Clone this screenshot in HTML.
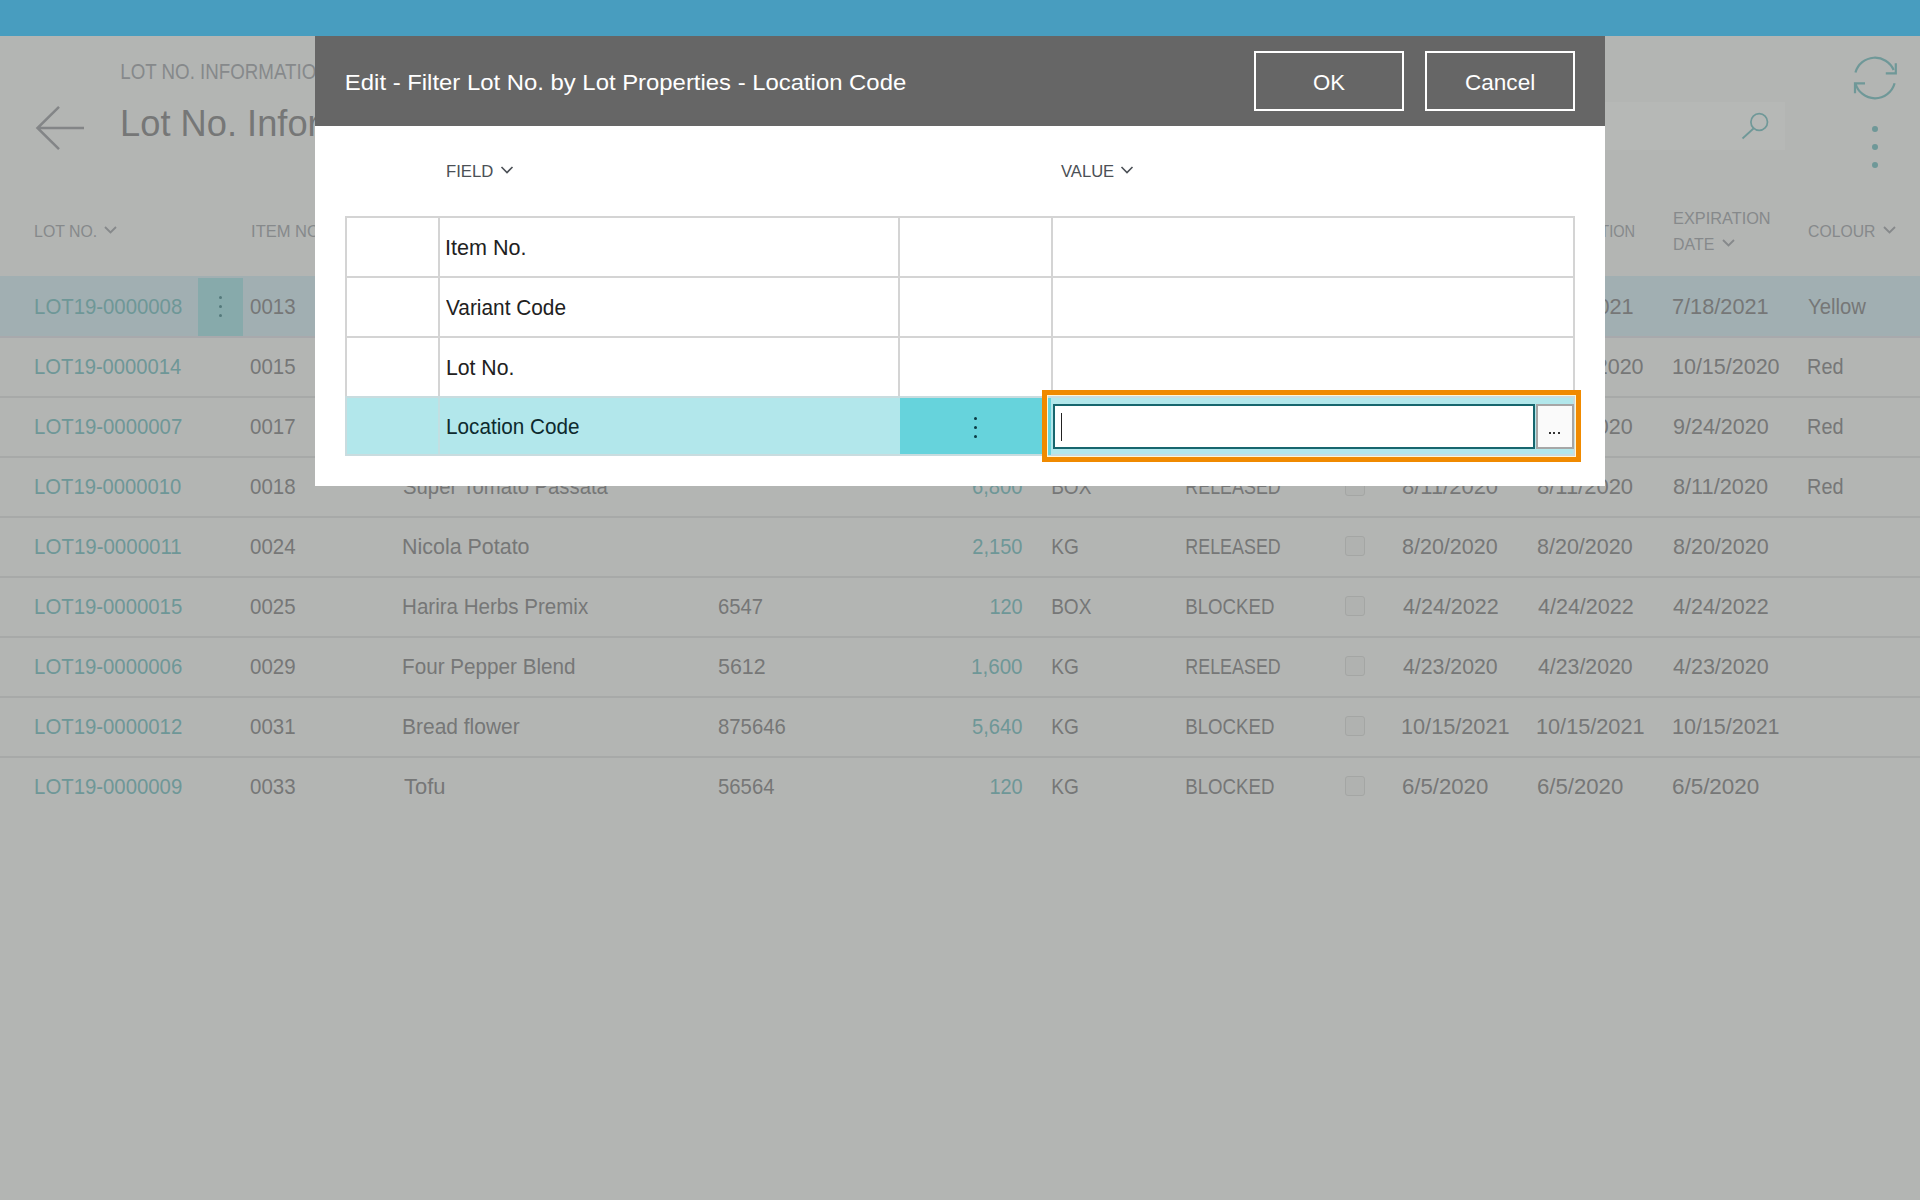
<!DOCTYPE html>
<html><head><meta charset="utf-8">
<style>
*{margin:0;padding:0;box-sizing:border-box}
html,body{width:1920px;height:1200px;overflow:hidden;background:#b3b5b3;font-family:"Liberation Sans",sans-serif;position:relative}
.tx{position:absolute;white-space:nowrap;line-height:1;font-family:"Liberation Sans",sans-serif}
.r{position:absolute}
.cb{position:absolute;width:20px;height:20px;border:1.5px solid #a4a6a4;background:#b0b2b0;border-radius:3px}
#dlg{position:absolute;left:315px;top:36px;width:1290px;height:450px;background:#fff;z-index:5}
#dlgt{position:absolute;left:0;top:0;width:1920px;height:1200px;z-index:6}
</style></head><body>
<div class="r" style="left:0;top:0;width:1920px;height:36px;background:#489dbf"></div>

<!-- back arrow -->
<svg class="r" style="left:30px;top:100px" width="60" height="56" viewBox="0 0 60 56"><path d="M7.5 28 H54 M29 6.8 L7.5 28 L29 49.2" stroke="#838587" stroke-width="2.5" fill="none"/></svg>

<!-- search box & icons -->
<div class="r" style="left:1605px;top:102px;width:180px;height:48px;background:#b6b8b6"></div>
<svg class="r" style="left:1730px;top:105px" width="45" height="45" viewBox="0 0 45 45"><circle cx="29.2" cy="17" r="8.3" stroke="#6f9898" stroke-width="1.7" fill="none"/><path d="M23.5 23.5 L12.5 33.5" stroke="#6f9898" stroke-width="1.8" fill="none"/></svg>
<svg class="r" style="left:1845px;top:48px" width="60" height="60" viewBox="0 0 60 60"><path d="M10.46 24.5 A20.3 20.3 0 0 1 48.66 22" stroke="#6f9898" stroke-width="2.2" fill="none"/><path d="M50.8 15.3 V25.3 H40.8" stroke="#6f9898" stroke-width="2.2" fill="none"/><path d="M49.6 35.3 A20.3 20.3 0 0 1 10.33 35" stroke="#6f9898" stroke-width="2.2" fill="none"/><path d="M10 45.3 V35.3 H20" stroke="#6f9898" stroke-width="2.2" fill="none"/></svg>
<div class="r" style="left:1872px;top:126px;width:6px;height:6px;border-radius:3px;background:#6f9898"></div>
<div class="r" style="left:1872px;top:144px;width:6px;height:6px;border-radius:3px;background:#6f9898"></div>
<div class="r" style="left:1872px;top:162px;width:6px;height:6px;border-radius:3px;background:#6f9898"></div>

<!-- header chevrons -->
<svg class="r" style="left:100px;top:222px" width="20" height="16" viewBox="0 0 20 16"><path d="M5 5 L10.5 10.5 L16 5" stroke="#86898b" stroke-width="1.8" fill="none"/></svg>
<svg class="r" style="left:1718px;top:236px" width="20" height="16" viewBox="0 0 20 16"><path d="M5 4 L10.5 9.5 L16 4" stroke="#86898b" stroke-width="1.8" fill="none"/></svg>
<svg class="r" style="left:1879px;top:222px" width="20" height="16" viewBox="0 0 20 16"><path d="M5 5 L10.5 10.5 L16 5" stroke="#86898b" stroke-width="1.8" fill="none"/></svg>

<!-- row highlight -->
<div class="r" style="left:0;top:276px;width:1920px;height:60px;background:#a1afb2"></div>
<div class="r" style="left:198px;top:278px;width:45px;height:58px;background:#87aaab"></div>
<div class="r" style="left:218.5px;top:296px;width:3px;height:3px;border-radius:2px;background:#557a7c"></div>
<div class="r" style="left:218.5px;top:305px;width:3px;height:3px;border-radius:2px;background:#557a7c"></div>
<div class="r" style="left:218.5px;top:314px;width:3px;height:3px;border-radius:2px;background:#557a7c"></div>
<!-- row lines -->
<div class="r" style="left:0;top:336px;width:1920px;height:2px;background:#a8a9ac"></div>
<div class="r" style="left:0;top:396px;width:1920px;height:2px;background:#a7a9a8"></div>
<div class="r" style="left:0;top:456px;width:1920px;height:2px;background:#a7a9a8"></div>
<div class="r" style="left:0;top:516px;width:1920px;height:2px;background:#a7a9a8"></div>
<div class="r" style="left:0;top:576px;width:1920px;height:2px;background:#a7a9a8"></div>
<div class="r" style="left:0;top:636px;width:1920px;height:2px;background:#a7a9a8"></div>
<div class="r" style="left:0;top:696px;width:1920px;height:2px;background:#a7a9a8"></div>
<div class="r" style="left:0;top:756px;width:1920px;height:2px;background:#a7a9a8"></div>
<!-- checkboxes -->
<div class="cb" style="left:1345px;top:476px"></div>
<div class="cb" style="left:1345px;top:536px"></div>
<div class="cb" style="left:1345px;top:596px"></div>
<div class="cb" style="left:1345px;top:656px"></div>
<div class="cb" style="left:1345px;top:716px"></div>
<div class="cb" style="left:1345px;top:776px"></div>

<div class="tx" id="t0" style="left:120.00px;transform-origin:1.50px 0;top:61.37px;font-size:22px;color:#86898b;transform:scaleX(0.8519);">LOT NO. INFORMATION</div>
<div class="tx" id="t1" style="left:120.00px;transform-origin:3.00px 0;top:104.75px;font-size:37.5px;color:#767777;transform:scaleX(0.9672);">Lot No. Information</div>
<div class="tx" id="t2" style="left:33.60px;transform-origin:1.70px 0;top:222.81px;font-size:17px;color:#86898b;transform:scaleX(0.9323);">LOT NO.</div>
<div class="tx" id="t3" style="left:250.60px;transform-origin:1.20px 0;top:222.81px;font-size:17px;color:#86898b;transform:scaleX(0.9726);">ITEM NO.</div>
<div class="tx" id="t4" style="left:1537.00px;transform-origin:1.00px 0;top:222.81px;font-size:17px;color:#86898b;transform:scaleX(0.8571);">PRODUCTION</div>
<div class="tx" id="t5" style="left:1672.50px;transform-origin:1.25px 0;top:210.11px;font-size:17px;color:#86898b;transform:scaleX(0.9596);">EXPIRATION</div>
<div class="tx" id="t6" style="left:1672.50px;transform-origin:1.25px 0;top:235.61px;font-size:17px;color:#86898b;transform:scaleX(0.9345);">DATE</div>
<div class="tx" id="t7" style="left:1807.50px;transform-origin:1.25px 0;top:222.81px;font-size:17px;color:#86898b;transform:scaleX(0.9261);">COLOUR</div>
<div class="tx" id="t8" style="left:33.60px;transform-origin:1.70px 0;top:296.78px;font-size:21.4px;color:#6e9797;transform:scaleX(0.9510);">LOT19-0000008</div>
<div class="tx" id="t9" style="left:250.00px;transform-origin:1.00px 0;top:296.78px;font-size:21.4px;color:#767777;transform:scaleX(0.9565);">0013</div>
<div class="tx" id="t10" style="left:403.00px;transform-origin:1.00px 0;top:296.78px;font-size:21.4px;color:#767777;">Sweet Chilli Sauce</div>
<div class="tx" id="t11" style="right:897.00px;transform-origin:calc(100% - 0.50px) 0;top:296.78px;font-size:21.4px;color:#6e9797;transform:scaleX(0.9245);">4,000</div>
<div class="tx" id="t12" style="left:1051.00px;transform-origin:1.50px 0;top:296.78px;font-size:21.4px;color:#767777;transform:scaleX(0.8929);">KG</div>
<div class="tx" id="t13" style="left:1185.00px;transform-origin:2.00px 0;top:296.78px;font-size:21.4px;color:#767777;transform:scaleX(0.8360);">RELEASED</div>
<div class="tx" id="t14" style="left:1402.00px;transform-origin:1.00px 0;top:296.78px;font-size:21.4px;color:#767777;transform:scaleX(1.0161);">7/18/2021</div>
<div class="tx" id="t15" style="left:1537.00px;transform-origin:1.00px 0;top:296.78px;font-size:21.4px;color:#767777;transform:scaleX(1.0161);">7/18/2021</div>
<div class="tx" id="t16" style="left:1672.00px;transform-origin:1.50px 0;top:296.78px;font-size:21.4px;color:#767777;transform:scaleX(1.0161);">7/18/2021</div>
<div class="tx" id="t17" style="left:1808.00px;transform-origin:0.50px 0;top:296.78px;font-size:21.4px;color:#767777;transform:scaleX(0.9475);">Yellow</div>
<div class="tx" id="t18" style="left:33.60px;transform-origin:1.70px 0;top:356.78px;font-size:21.4px;color:#6e9797;transform:scaleX(0.9448);">LOT19-0000014</div>
<div class="tx" id="t19" style="left:250.00px;transform-origin:1.00px 0;top:356.78px;font-size:21.4px;color:#767777;transform:scaleX(0.9565);">0015</div>
<div class="tx" id="t20" style="left:404.00px;transform-origin:0.00px 0;top:356.78px;font-size:21.4px;color:#767777;">Tomato Ketchup</div>
<div class="tx" id="t21" style="right:897.00px;transform-origin:calc(100% - 0.50px) 0;top:356.78px;font-size:21.4px;color:#6e9797;transform:scaleX(0.9423);">2,500</div>
<div class="tx" id="t22" style="left:1051.00px;transform-origin:1.50px 0;top:356.78px;font-size:21.4px;color:#767777;transform:scaleX(0.8907);">BOX</div>
<div class="tx" id="t23" style="left:1185.00px;transform-origin:2.00px 0;top:356.78px;font-size:21.4px;color:#767777;transform:scaleX(0.8360);">RELEASED</div>
<div class="tx" id="t24" style="left:1401.00px;transform-origin:2.00px 0;top:356.78px;font-size:21.4px;color:#767777;transform:scaleX(1.0048);">10/15/2020</div>
<div class="tx" id="t25" style="left:1536.00px;transform-origin:2.00px 0;top:356.78px;font-size:21.4px;color:#767777;transform:scaleX(1.0048);">10/15/2020</div>
<div class="tx" id="t26" style="left:1672.00px;transform-origin:1.50px 0;top:356.78px;font-size:21.4px;color:#767777;transform:scaleX(1.0048);">10/15/2020</div>
<div class="tx" id="t27" style="left:1807.00px;transform-origin:1.50px 0;top:356.78px;font-size:21.4px;color:#767777;transform:scaleX(0.9278);">Red</div>
<div class="tx" id="t28" style="left:33.60px;transform-origin:1.70px 0;top:416.78px;font-size:21.4px;color:#6e9797;transform:scaleX(0.9510);">LOT19-0000007</div>
<div class="tx" id="t29" style="left:250.00px;transform-origin:1.00px 0;top:416.78px;font-size:21.4px;color:#767777;transform:scaleX(0.9565);">0017</div>
<div class="tx" id="t30" style="left:402.00px;transform-origin:2.00px 0;top:416.78px;font-size:21.4px;color:#767777;">Roasted Red Pepper</div>
<div class="tx" id="t31" style="right:897.00px;transform-origin:calc(100% - 0.50px) 0;top:416.78px;font-size:21.4px;color:#6e9797;transform:scaleX(0.9608);">1,200</div>
<div class="tx" id="t32" style="left:1051.00px;transform-origin:1.50px 0;top:416.78px;font-size:21.4px;color:#767777;transform:scaleX(0.8929);">KG</div>
<div class="tx" id="t33" style="left:1185.00px;transform-origin:2.00px 0;top:416.78px;font-size:21.4px;color:#767777;transform:scaleX(0.8360);">RELEASED</div>
<div class="tx" id="t34" style="left:1402.00px;transform-origin:1.00px 0;top:416.78px;font-size:21.4px;color:#767777;transform:scaleX(1.0053);">9/24/2020</div>
<div class="tx" id="t35" style="left:1537.00px;transform-origin:1.00px 0;top:416.78px;font-size:21.4px;color:#767777;transform:scaleX(1.0053);">9/24/2020</div>
<div class="tx" id="t36" style="left:1673.00px;transform-origin:0.50px 0;top:416.78px;font-size:21.4px;color:#767777;transform:scaleX(1.0053);">9/24/2020</div>
<div class="tx" id="t37" style="left:1807.00px;transform-origin:1.50px 0;top:416.78px;font-size:21.4px;color:#767777;transform:scaleX(0.9278);">Red</div>
<div class="tx" id="t38" style="left:33.60px;transform-origin:1.70px 0;top:476.78px;font-size:21.4px;color:#6e9797;transform:scaleX(0.9448);">LOT19-0000010</div>
<div class="tx" id="t39" style="left:250.00px;transform-origin:1.00px 0;top:476.78px;font-size:21.4px;color:#767777;transform:scaleX(0.9565);">0018</div>
<div class="tx" id="t40" style="left:403.00px;transform-origin:1.00px 0;top:476.78px;font-size:21.4px;color:#767777;transform:scaleX(0.9479);">Super Tomato Passata</div>
<div class="tx" id="t41" style="right:897.00px;transform-origin:calc(100% - 0.50px) 0;top:476.78px;font-size:21.4px;color:#6e9797;transform:scaleX(0.9423);">6,800</div>
<div class="tx" id="t42" style="left:1051.00px;transform-origin:1.50px 0;top:476.78px;font-size:21.4px;color:#767777;transform:scaleX(0.8907);">BOX</div>
<div class="tx" id="t43" style="left:1185.00px;transform-origin:2.00px 0;top:476.78px;font-size:21.4px;color:#767777;transform:scaleX(0.8360);">RELEASED</div>
<div class="tx" id="t44" style="left:1402.00px;transform-origin:1.00px 0;top:476.78px;font-size:21.4px;color:#767777;transform:scaleX(1.0272);">8/11/2020</div>
<div class="tx" id="t45" style="left:1537.00px;transform-origin:1.00px 0;top:476.78px;font-size:21.4px;color:#767777;transform:scaleX(1.0272);">8/11/2020</div>
<div class="tx" id="t46" style="left:1673.00px;transform-origin:0.50px 0;top:476.78px;font-size:21.4px;color:#767777;transform:scaleX(1.0161);">8/11/2020</div>
<div class="tx" id="t47" style="left:1807.00px;transform-origin:1.50px 0;top:476.78px;font-size:21.4px;color:#767777;transform:scaleX(0.9278);">Red</div>
<div class="tx" id="t48" style="left:33.60px;transform-origin:1.70px 0;top:536.78px;font-size:21.4px;color:#6e9797;transform:scaleX(0.9572);">LOT19-0000011</div>
<div class="tx" id="t49" style="left:250.00px;transform-origin:1.00px 0;top:536.78px;font-size:21.4px;color:#767777;transform:scaleX(0.9565);">0024</div>
<div class="tx" id="t50" style="left:402.00px;transform-origin:2.00px 0;top:536.78px;font-size:21.4px;color:#767777;transform:scaleX(1.0024);">Nicola Potato</div>
<div class="tx" id="t51" style="right:897.00px;transform-origin:calc(100% - 0.50px) 0;top:536.78px;font-size:21.4px;color:#6e9797;transform:scaleX(0.9365);">2,150</div>
<div class="tx" id="t52" style="left:1051.00px;transform-origin:1.50px 0;top:536.78px;font-size:21.4px;color:#767777;transform:scaleX(0.8929);">KG</div>
<div class="tx" id="t53" style="left:1185.00px;transform-origin:2.00px 0;top:536.78px;font-size:21.4px;color:#767777;transform:scaleX(0.8360);">RELEASED</div>
<div class="tx" id="t54" style="left:1402.00px;transform-origin:1.00px 0;top:536.78px;font-size:21.4px;color:#767777;transform:scaleX(1.0053);">8/20/2020</div>
<div class="tx" id="t55" style="left:1537.00px;transform-origin:1.00px 0;top:536.78px;font-size:21.4px;color:#767777;transform:scaleX(1.0053);">8/20/2020</div>
<div class="tx" id="t56" style="left:1673.00px;transform-origin:0.50px 0;top:536.78px;font-size:21.4px;color:#767777;transform:scaleX(1.0053);">8/20/2020</div>
<div class="tx" id="t57" style="left:33.60px;transform-origin:1.70px 0;top:596.78px;font-size:21.4px;color:#6e9797;transform:scaleX(0.9510);">LOT19-0000015</div>
<div class="tx" id="t58" style="left:250.00px;transform-origin:1.00px 0;top:596.78px;font-size:21.4px;color:#767777;transform:scaleX(0.9565);">0025</div>
<div class="tx" id="t59" style="left:402.00px;transform-origin:2.00px 0;top:596.78px;font-size:21.4px;color:#767777;transform:scaleX(0.9607);">Harira Herbs Premix</div>
<div class="tx" id="t60" style="left:718.00px;transform-origin:1.00px 0;top:596.78px;font-size:21.4px;color:#767777;transform:scaleX(0.9457);">6547</div>
<div class="tx" id="t61" style="right:897.00px;transform-origin:calc(100% - 0.50px) 0;top:596.78px;font-size:21.4px;color:#6e9797;transform:scaleX(0.9324);">120</div>
<div class="tx" id="t62" style="left:1051.00px;transform-origin:1.50px 0;top:596.78px;font-size:21.4px;color:#767777;transform:scaleX(0.8907);">BOX</div>
<div class="tx" id="t63" style="left:1185.00px;transform-origin:2.00px 0;top:596.78px;font-size:21.4px;color:#767777;transform:scaleX(0.8727);">BLOCKED</div>
<div class="tx" id="t64" style="left:1403.00px;transform-origin:0.00px 0;top:596.78px;font-size:21.4px;color:#767777;transform:scaleX(1.0053);">4/24/2022</div>
<div class="tx" id="t65" style="left:1538.00px;transform-origin:0.00px 0;top:596.78px;font-size:21.4px;color:#767777;transform:scaleX(1.0053);">4/24/2022</div>
<div class="tx" id="t66" style="left:1673.00px;transform-origin:0.50px 0;top:596.78px;font-size:21.4px;color:#767777;transform:scaleX(1.0053);">4/24/2022</div>
<div class="tx" id="t67" style="left:33.60px;transform-origin:1.70px 0;top:656.78px;font-size:21.4px;color:#6e9797;transform:scaleX(0.9510);">LOT19-0000006</div>
<div class="tx" id="t68" style="left:250.00px;transform-origin:1.00px 0;top:656.78px;font-size:21.4px;color:#767777;transform:scaleX(0.9565);">0029</div>
<div class="tx" id="t69" style="left:402.00px;transform-origin:2.00px 0;top:656.78px;font-size:21.4px;color:#767777;transform:scaleX(0.9659);">Four Pepper Blend</div>
<div class="tx" id="t70" style="left:718.00px;transform-origin:1.00px 0;top:656.78px;font-size:21.4px;color:#767777;">5612</div>
<div class="tx" id="t71" style="right:897.00px;transform-origin:calc(100% - 0.50px) 0;top:656.78px;font-size:21.4px;color:#6e9797;transform:scaleX(0.9608);">1,600</div>
<div class="tx" id="t72" style="left:1051.00px;transform-origin:1.50px 0;top:656.78px;font-size:21.4px;color:#767777;transform:scaleX(0.8929);">KG</div>
<div class="tx" id="t73" style="left:1185.00px;transform-origin:2.00px 0;top:656.78px;font-size:21.4px;color:#767777;transform:scaleX(0.8360);">RELEASED</div>
<div class="tx" id="t74" style="left:1403.00px;transform-origin:0.00px 0;top:656.78px;font-size:21.4px;color:#767777;transform:scaleX(0.9947);">4/23/2020</div>
<div class="tx" id="t75" style="left:1538.00px;transform-origin:0.00px 0;top:656.78px;font-size:21.4px;color:#767777;transform:scaleX(0.9947);">4/23/2020</div>
<div class="tx" id="t76" style="left:1673.00px;transform-origin:0.50px 0;top:656.78px;font-size:21.4px;color:#767777;transform:scaleX(1.0053);">4/23/2020</div>
<div class="tx" id="t77" style="left:33.60px;transform-origin:1.70px 0;top:716.78px;font-size:21.4px;color:#6e9797;transform:scaleX(0.9510);">LOT19-0000012</div>
<div class="tx" id="t78" style="left:250.00px;transform-origin:1.00px 0;top:716.78px;font-size:21.4px;color:#767777;transform:scaleX(0.9565);">0031</div>
<div class="tx" id="t79" style="left:402.00px;transform-origin:2.00px 0;top:716.78px;font-size:21.4px;color:#767777;transform:scaleX(0.9797);">Bread flower</div>
<div class="tx" id="t80" style="left:718.00px;transform-origin:1.00px 0;top:716.78px;font-size:21.4px;color:#767777;transform:scaleX(0.9486);">875646</div>
<div class="tx" id="t81" style="right:897.00px;transform-origin:calc(100% - 0.50px) 0;top:716.78px;font-size:21.4px;color:#6e9797;transform:scaleX(0.9423);">5,640</div>
<div class="tx" id="t82" style="left:1051.00px;transform-origin:1.50px 0;top:716.78px;font-size:21.4px;color:#767777;transform:scaleX(0.8929);">KG</div>
<div class="tx" id="t83" style="left:1185.00px;transform-origin:2.00px 0;top:716.78px;font-size:21.4px;color:#767777;transform:scaleX(0.8727);">BLOCKED</div>
<div class="tx" id="t84" style="left:1401.00px;transform-origin:2.00px 0;top:716.78px;font-size:21.4px;color:#767777;transform:scaleX(1.0144);">10/15/2021</div>
<div class="tx" id="t85" style="left:1536.00px;transform-origin:2.00px 0;top:716.78px;font-size:21.4px;color:#767777;transform:scaleX(1.0144);">10/15/2021</div>
<div class="tx" id="t86" style="left:1672.00px;transform-origin:1.50px 0;top:716.78px;font-size:21.4px;color:#767777;transform:scaleX(1.0048);">10/15/2021</div>
<div class="tx" id="t87" style="left:33.60px;transform-origin:1.70px 0;top:776.78px;font-size:21.4px;color:#6e9797;transform:scaleX(0.9510);">LOT19-0000009</div>
<div class="tx" id="t88" style="left:250.00px;transform-origin:1.00px 0;top:776.78px;font-size:21.4px;color:#767777;transform:scaleX(0.9565);">0033</div>
<div class="tx" id="t89" style="left:404.00px;transform-origin:0.00px 0;top:776.78px;font-size:21.4px;color:#767777;transform:scaleX(1.0256);">Tofu</div>
<div class="tx" id="t90" style="left:718.00px;transform-origin:1.00px 0;top:776.78px;font-size:21.4px;color:#767777;transform:scaleX(0.9483);">56564</div>
<div class="tx" id="t91" style="right:897.00px;transform-origin:calc(100% - 0.50px) 0;top:776.78px;font-size:21.4px;color:#6e9797;transform:scaleX(0.9324);">120</div>
<div class="tx" id="t92" style="left:1051.00px;transform-origin:1.50px 0;top:776.78px;font-size:21.4px;color:#767777;transform:scaleX(0.8929);">KG</div>
<div class="tx" id="t93" style="left:1185.00px;transform-origin:2.00px 0;top:776.78px;font-size:21.4px;color:#767777;transform:scaleX(0.8727);">BLOCKED</div>
<div class="tx" id="t94" style="left:1402.00px;transform-origin:1.00px 0;top:776.78px;font-size:21.4px;color:#767777;transform:scaleX(1.0366);">6/5/2020</div>
<div class="tx" id="t95" style="left:1537.00px;transform-origin:1.00px 0;top:776.78px;font-size:21.4px;color:#767777;transform:scaleX(1.0366);">6/5/2020</div>
<div class="tx" id="t96" style="left:1672.00px;transform-origin:1.50px 0;top:776.78px;font-size:21.4px;color:#767777;transform:scaleX(1.0494);">6/5/2020</div>

<div id="dlg">
  <div class="r" style="left:0;top:0;width:1290px;height:90px;background:#666666"></div>
  <div class="r" style="left:939px;top:15px;width:150px;height:60px;border:2px solid #fff"></div>
  <div class="r" style="left:1110px;top:15px;width:150px;height:60px;border:2px solid #fff"></div>
  <svg class="r" style="left:181px;top:127px" width="20" height="16" viewBox="0 0 20 16"><path d="M5.5 4 L11 9.5 L16.5 4" stroke="#4b5056" stroke-width="1.6" fill="none"/></svg>
  <svg class="r" style="left:801px;top:127px" width="20" height="16" viewBox="0 0 20 16"><path d="M5.5 4 L11 9.5 L16.5 4" stroke="#4b5056" stroke-width="1.6" fill="none"/></svg>
  <!-- grid (coords relative to dialog: subtract 315,36) -->
  <div class="r" style="left:30px;top:180px;width:1230px;height:2px;background:#d4d4d4"></div>
  <div class="r" style="left:30px;top:240px;width:1230px;height:2px;background:#d4d4d4"></div>
  <div class="r" style="left:30px;top:300px;width:1230px;height:2px;background:#d4d4d4"></div>
  <div class="r" style="left:30px;top:180px;width:2px;height:240px;background:#d4d4d4"></div>
  <div class="r" style="left:123px;top:180px;width:2px;height:180px;background:#d4d4d4"></div>
  <div class="r" style="left:583px;top:180px;width:2px;height:180px;background:#d4d4d4"></div>
  <div class="r" style="left:736px;top:180px;width:2px;height:180px;background:#d4d4d4"></div>
  <div class="r" style="left:1258px;top:180px;width:2px;height:180px;background:#d4d4d4"></div>
  <!-- selected row -->
  <div class="r" style="left:30px;top:360px;width:1230px;height:60px;background:#c9dcdf"></div>
  <div class="r" style="left:32px;top:362px;width:1226px;height:56px;background:#b2e7eb"></div>
  <div class="r" style="left:123px;top:362px;width:2px;height:56px;background:#c2dfe2"></div>
  <div class="r" style="left:585px;top:362px;width:151px;height:56px;background:#66d3dc"></div>
  <div class="r" style="left:659px;top:380.5px;width:3.4px;height:3.4px;border-radius:2px;background:#0b3c45"></div>
  <div class="r" style="left:659px;top:389.5px;width:3.4px;height:3.4px;border-radius:2px;background:#0b3c45"></div>
  <div class="r" style="left:659px;top:398.5px;width:3.4px;height:3.4px;border-radius:2px;background:#0b3c45"></div>
  <!-- orange focus -->
  <div class="r" style="left:727px;top:354px;width:539px;height:72px;border:5px solid #f08a00"></div>
  <div class="r" style="left:732px;top:359px;width:529px;height:62px;border:1px solid #fff6d8"></div>
  <div class="r" style="left:733px;top:363px;width:3px;height:56px;background:#66d3dc"></div>
  <!-- input -->
  <div class="r" style="left:738px;top:368px;width:482px;height:45px;border:2px solid #17666e;background:#fff"></div>
  <div class="r" style="left:746px;top:377px;width:1.4px;height:28px;background:#222"></div>
  <div class="r" style="left:1221px;top:368px;width:38px;height:45px;border:2px solid #a6a6a6;background:#fafafa"></div>
  <div class="r" style="left:1234px;top:396px;width:2px;height:2px;background:#333"></div>
  <div class="r" style="left:1238.4px;top:396px;width:2px;height:2px;background:#333"></div>
  <div class="r" style="left:1242.8px;top:396px;width:2px;height:2px;background:#333"></div>
</div>
<div id="dlgt">
<div class="tx" id="t97" style="left:345.00px;transform-origin:1.50px 0;top:71.57px;font-size:22px;color:#ffffff;transform:scaleX(1.0852);">Edit - Filter Lot No. by Lot Properties - Location Code</div>
<div class="tx" id="t98" style="left:1313.00px;transform-origin:0.50px 0;top:71.77px;font-size:22px;color:#ffffff;transform:scaleX(1.0065);">OK</div>
<div class="tx" id="t99" style="left:1464.79px;transform-origin:1.11px 0;top:71.77px;font-size:22px;color:#ffffff;transform:scaleX(1.0258);">Cancel</div>
<div class="tx" id="t100" style="left:445.79px;transform-origin:1.11px 0;top:163.00px;font-size:16.3px;color:#4b5056;transform:scaleX(1.0250);">FIELD</div>
<div class="tx" id="t101" style="left:1061.00px;transform-origin:0.50px 0;top:163.00px;font-size:16.3px;color:#4b5056;transform:scaleX(1.0196);">VALUE</div>
<div class="tx" id="t102" style="left:444.50px;transform-origin:2.25px 0;top:237.88px;font-size:21.4px;color:#212121;transform:scaleX(1.0078);">Item No.</div>
<div class="tx" id="t103" style="left:446.00px;transform-origin:0.50px 0;top:297.88px;font-size:21.4px;color:#212121;transform:scaleX(0.9730);">Variant Code</div>
<div class="tx" id="t104" style="left:445.50px;transform-origin:1.25px 0;top:357.88px;font-size:21.4px;color:#212121;transform:scaleX(0.9909);">Lot No.</div>
<div class="tx" id="t105" style="left:445.50px;transform-origin:1.25px 0;top:416.78px;font-size:21.4px;color:#0d2a2e;transform:scaleX(0.9669);">Location Code</div>
</div>
</body></html>
